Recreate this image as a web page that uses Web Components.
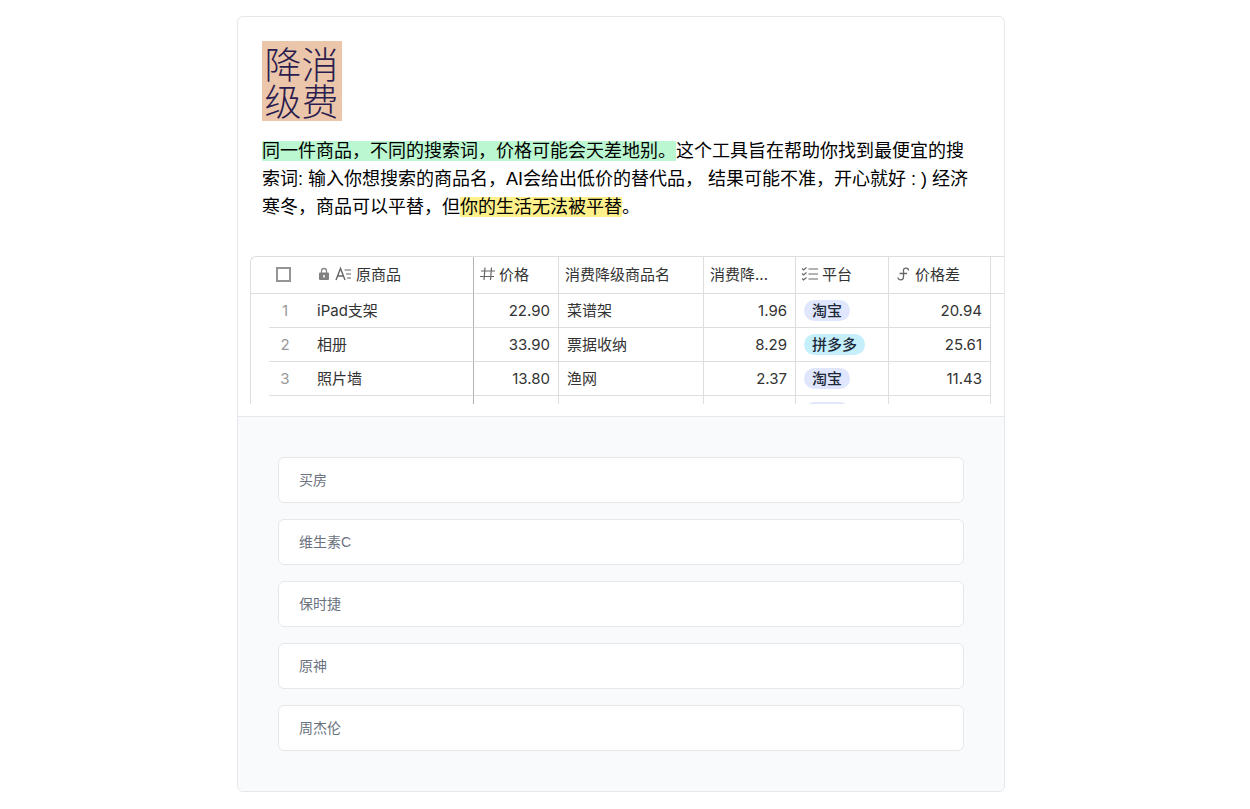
<!DOCTYPE html>
<html lang="zh-CN">
<head>
    <meta charset="utf-8">
    <meta name="viewport" content="width=device-width, initial-scale=1">
    <title>消费降级</title>
    <style>
        body{
            margin: 0;
            padding: 16px 24px 16px 16px;
            background: #fff;
            color: #000;
            font-family: "Liberation Sans", "Noto Sans CJK SC", sans-serif;
        }
    </style>
</head>
<body>
    <tool-card>
        <app-logo slot="intro">消费降级</app-logo>
        <tool-intro slot="intro"><mark-text tone="green">同一件商品，不同的搜索词，价格可能会天差地别。</mark-text>这个工具旨在帮助你找到最便宜的搜索词: 输入你想搜索的商品名，AI会给出低价的替代品， 结果可能不准，开心就好 : ) 经济寒冬，商品可以平替，但<mark-text tone="yellow">你的生活无法被平替</mark-text>。</tool-intro>
        <price-table slot="preview"></price-table>
        <example-item slot="examples">买房</example-item>
        <example-item slot="examples">维生素C</example-item>
        <example-item slot="examples">保时捷</example-item>
        <example-item slot="examples">原神</example-item>
        <example-item slot="examples">周杰伦</example-item>
    </tool-card>

    <script>
        class ToolCard extends HTMLElement
        {
            constructor() {
                super()
                this._shadowRoot = this.attachShadow({ mode: 'open' })
            }
            connectedCallback(){
                this._shadowRoot.innerHTML =
                `
                    <style>
                        :host{
                            display: block;
                            box-sizing: border-box;
                            max-width: 768px;
                            margin: 0 auto;
                            border: 1px solid #e5e7eb;
                            border-radius: 6px;
                            overflow: hidden;
                        }
                        header{
                            display: flex;
                            flex-direction: column;
                            gap: 16px;
                            padding: 24px 24px 23px;
                        }
                        .preview{
                            padding: 12px 0 12px 12px;
                        }
                        .examples{
                            display: flex;
                            flex-direction: column;
                            gap: 16px;
                            padding: 40px;
                            border-top: 1px solid #e5e7eb;
                            background: #f9fafc;
                        }
                    </style>
                    <header><slot name="intro"></slot></header>
                    <div class="preview"><slot name="preview"></slot></div>
                    <section class="examples"><slot name="examples"></slot></section>
                `
            }
        }
        window.customElements.define('tool-card', ToolCard)

        class AppLogo extends HTMLElement
        {
            constructor() {
                super()
                this._shadowRoot = this.attachShadow({ mode: 'open' })
            }
            connectedCallback(){
                this._shadowRoot.innerHTML =
                `
                    <style>
                        :host{
                            display: block;
                            box-sizing: border-box;
                            width: 80px;
                            height: 80px;
                            padding: 5px 4px 1px 2px;
                            background: #ebc6aa;
                            color: #2b1d4f;
                            font: 300 37px/37px "Noto Sans CJK SC", sans-serif;
                            writing-mode: vertical-rl;
                        }
                    </style>
                    <slot></slot>
                `
            }
        }
        window.customElements.define('app-logo', AppLogo)

        class ToolIntro extends HTMLElement
        {
            constructor() {
                super()
                this._shadowRoot = this.attachShadow({ mode: 'open' })
            }
            connectedCallback(){
                this._shadowRoot.innerHTML =
                `
                    <style>
                        :host{
                            display: block;
                            font-size: 18px;
                            line-height: 28px;
                        }
                    </style>
                    <slot></slot>
                `
            }
        }
        window.customElements.define('tool-intro', ToolIntro)

        class MarkText extends HTMLElement
        {
            constructor() {
                super()
                this._shadowRoot = this.attachShadow({ mode: 'open' })
            }
            connectedCallback(){
                // inline element: no white space round the slot
                this._shadowRoot.innerHTML =
                `<style>
                    :host{ display: inline; background: #bbf7d0; }
                    :host([tone="yellow"]){ background: #fef08a; }
                </style><slot></slot>`
            }
        }
        window.customElements.define('mark-text', MarkText)

        class ExampleItem extends HTMLElement
        {
            constructor() {
                super()
                this._shadowRoot = this.attachShadow({ mode: 'open' })
            }
            connectedCallback(){
                this._shadowRoot.innerHTML =
                `
                    <style>
                        :host{ display: block; }
                        button{
                            display: block;
                            width: 100%;
                            padding: 12px 20px;
                            border: 1px solid #e5e7eb;
                            border-radius: 6px;
                            background: #fff;
                            color: #6b7280;
                            font: inherit;
                            font-size: 14px;
                            line-height: 20px;
                            text-align: left;
                            cursor: pointer;
                        }
                        button:hover{ border-color: #9ca3af; }
                    </style>
                    <button type="button"><slot></slot></button>
                `
            }
        }
        window.customElements.define('example-item', ExampleItem)

        class PlatformTag extends HTMLElement
        {
            constructor() {
                super()
                this._shadowRoot = this.attachShadow({ mode: 'open' })
            }
            connectedCallback(){
                this._shadowRoot.innerHTML =
                `
                    <style>
                        :host{
                            display: inline-block;
                            min-width: 30px;
                            min-height: 21px;
                            padding: 0 8px;
                            border-radius: 11px;
                            background: #dfe6fd;
                            color: #1d2939;
                            font-weight: 500;
                            line-height: 21px;
                            vertical-align: top;
                        }
                        :host([tone="cyan"]){ background: #c5effa; }
                    </style>
                    <slot></slot>
                `
            }
        }
        window.customElements.define('platform-tag', PlatformTag)

        const rows = [
            ['iPad支架', '22.90', '菜谱架', '1.96', '淘宝', '20.94'],
            ['相册', '33.90', '票据收纳', '8.29', '拼多多', '25.61'],
            ['照片墙', '13.80', '渔网', '2.37', '淘宝', '11.43'],
            ['', '', '', '', '', '']
        ]

        const icons = {
            lock: `<svg width="12" height="14" viewBox="0 0 12 14"><path d="M3.500 6V4a2.500 2.500 0 0 1 5 0v2" fill="none" stroke="#8a8a8a" stroke-width="1.3"/><rect x="1" y="5.500" width="10" height="7.500" rx="1" fill="#808080"/><path d="M6 8v2.500" stroke="#fff" stroke-width="1.5"/></svg>`,
            text: `<svg width="18" height="16" viewBox="0 0 18 16" fill="none" stroke="#666" stroke-width="1.4"><path d="M2 14 6.500 2.500 11 14M3.500 10h6"/><path d="M10.500 4H17M12 8h5M13 12h4" stroke-width="1.2"/></svg>`,
            number: `<svg width="15" height="16" viewBox="0 0 15 16" fill="none" stroke="#666" stroke-width="1.2"><path d="M1 5h14M0 10.500h14M5 1.500 4 14M11.500 1.500l-1 12.500"/></svg>`,
            list: `<svg width="16" height="16" viewBox="0 0 16 16" fill="none" stroke="#666" stroke-width="1.2"><path d="M6.500 3H16M6.500 8H16M6.500 13H16M0 2.500l1.500 1.500L4.500 1.500M0 7.500 1.500 9l3-2.500M0 12.500 1.500 14l3-2.500"/></svg>`,
            formula: `<svg width="16" height="16" viewBox="0 0 16 16" fill="none" stroke="#666" stroke-width="1.3"><path d="M13.500 4.500C13.500 1.500 8.500 1 8.500 4.500V11C8.500 14.800 3 14.800 3 11.500M4.500 7.500H12"/></svg>`
        }

        class PriceTable extends HTMLElement
        {
            constructor() {
                super()
                this._shadowRoot = this.attachShadow({ mode: 'open' })
            }
            connectedCallback(){
                this._shadowRoot.innerHTML =
                `
                    <style>
                        /* only the first rows show, the rest is cut off */
                        :host{
                            display: block;
                            height: 148px;
                            overflow: hidden;
                            color: #333;
                            font: 15px/21px Inter, "Noto Sans CJK SC", sans-serif;
                        }
                        table{
                            width: 100%;
                            table-layout: fixed;
                            border-spacing: 0;
                            border: solid #dcdee0;
                            border-width: 1px 0 0 1px;
                            border-radius: 6px 0 0 0;
                        }
                        th, td{
                            box-sizing: border-box;
                            padding: 6px 8px;
                            border: solid #dcdee0;
                            border-width: 0 1px 1px 0;
                            font-weight: 400;
                            text-align: left;
                            white-space: nowrap;
                        }
                        th{ height: 37px; padding: 0 6px 2px; }
                        td{ height: 34px; }
                        th:last-child{ border-right: 0; }
                        td:last-child{ border: 0; }
                        .label{ display: flex; align-items: center; gap: 4px; }
                        .select{ padding: 0 0 2px 25px; border-right: 0; }
                        .gutter{ padding: 0; border: 0; }
                        .index{ border-right: 0; color: #999; text-align: center; padding: 6px 0; }
                        .name{ border-right-color: #b4b4b4; }
                        th.name{ padding-left: 17px; }
                        td.name{ padding-left: 16px; }
                        .num{ text-align: right; }
                        input{
                            display: block;
                            appearance: none;
                            box-sizing: border-box;
                            width: 15px;
                            height: 15px;
                            margin: 0;
                            border: 2px solid #959595;
                            background: #fff;
                        }
                        svg{ flex: none; }
                    </style>
                    <table>
                        <colgroup>
                            <col style="width: 18px"><col style="width: 32px"><col style="width: 173px">
                            <col style="width: 85px"><col style="width: 145px"><col style="width: 92px">
                            <col style="width: 93px"><col style="width: 102px"><col>
                        </colgroup>
                        <thead>
                            <tr>
                                <th class="select" colspan="2"><input type="checkbox" aria-label="全选"></th>
                                <th class="name"><span class="label">${icons.lock}${icons.text}原商品</span></th>
                                <th><span class="label">${icons.number}价格</span></th>
                                <th>消费降级商品名</th>
                                <th>消费降...</th>
                                <th><span class="label">${icons.list}平台</span></th>
                                <th><span class="label">${icons.formula}价格差</span></th>
                                <th></th>
                            </tr>
                        </thead>
                        <tbody>
                            ${rows.map(([name, price, cheap, cheapPrice, platform, diff], i) => `
                                <tr>
                                    <td class="gutter"></td>
                                    <td class="index">${name ? i + 1 : ''}</td>
                                    <td class="name">${name}</td>
                                    <td class="num">${price}</td>
                                    <td>${cheap}</td>
                                    <td class="num">${cheapPrice}</td>
                                    <td><platform-tag tone="${platform === '拼多多' ? 'cyan' : 'blue'}">${platform}</platform-tag></td>
                                    <td class="num">${diff}</td>
                                    <td></td>
                                </tr>
                            `).join('')}
                        </tbody>
                    </table>
                `
            }
        }
        window.customElements.define('price-table', PriceTable)
    </script>
</body>
</html>
